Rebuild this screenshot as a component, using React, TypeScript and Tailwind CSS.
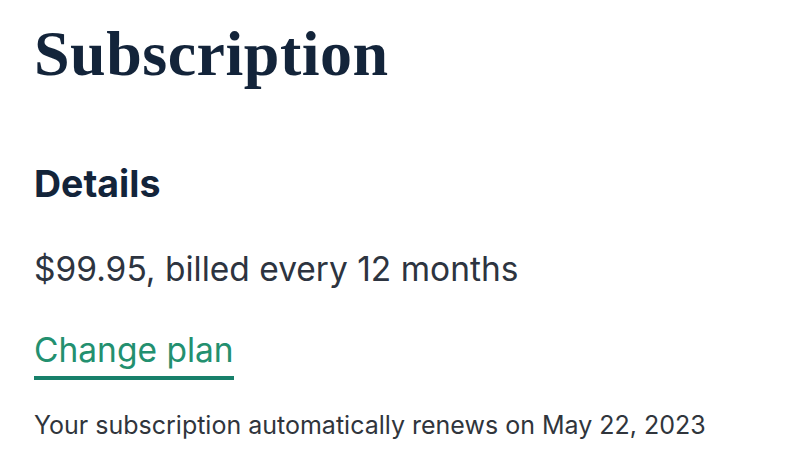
import React from "react";

const SubscriptionDetails = () => {
  const price = "$99.95";
  const interval = 12;
  const renewsOn = "May 22, 2023";

  return (
    <div className="min-h-[464px] w-[800px] bg-white px-[34px] pt-[16px] font-['Inter',sans-serif]">
      <h1 className="font-['Liberation_Serif',serif] text-[64px] font-bold leading-[76px] tracking-[0.5px] text-[#13243a]">
        Subscription
      </h1>

      <h2 className="mt-[73px] text-[37.5px] font-bold leading-none text-[#13243a]">Details</h2>

      <p className="mt-[50px] text-[33.5px] leading-none text-[#2d3440]">
        {price}, billed every {interval} months
      </p>

      <a
        href="#"
        className="mt-[48px] block w-fit border-b-[4px] border-[#17806a] pb-[8px] text-[33.5px] leading-none text-[#23906f]"
      >
        Change plan
      </a>

      <p className="mt-[33px] text-[25px] leading-none text-[#30353c]">
        Your subscription automatically renews on {renewsOn}
      </p>
    </div>
  );
};

export default function App() {
  return <SubscriptionDetails />;
}
